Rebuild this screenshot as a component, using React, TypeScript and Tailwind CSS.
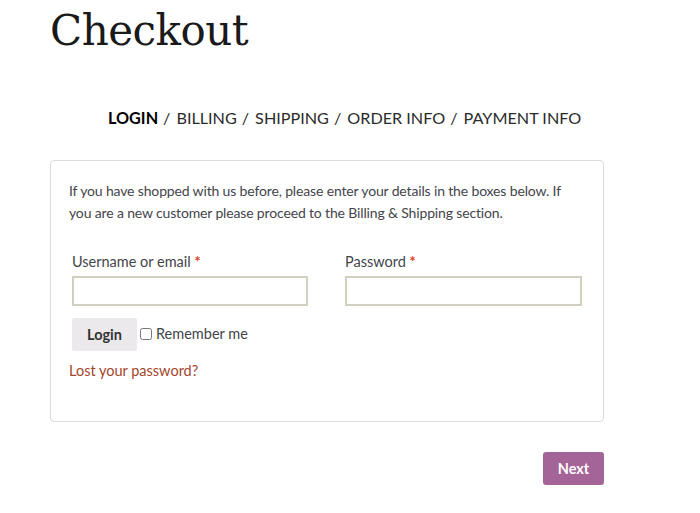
export default function App() {
  const steps = ['BILLING', 'SHIPPING', 'ORDER INFO', 'PAYMENT INFO'];
  return (
    <div className="w-[700px] h-[513px] bg-white text-[#43454b] font-['Lato','Open_Sans',sans-serif]">
      <div className="pl-[50px] w-[604px]">
        <h1 className="pt-[6px] text-[42px] leading-[50px] text-[#1a1a1a] font-['DejaVu_Serif',serif] tracking-[-0.5px]">
          Checkout
        </h1>

        <div className="mt-[51px] ml-[58px] flex items-center text-[16.2px] leading-[22px] text-[#2b2b2b]">
          <span className="font-bold text-black">LOGIN</span>
          {steps.map((s) => (
            <span key={s} className="flex">
              <span className="mx-[5px]">/</span>
              <span className="ml-[1px]">{s}</span>
            </span>
          ))}
        </div>

        <div className="mt-[31px] border border-[#dcdcdc] rounded-[4px] pl-[18px] pr-[20px] pt-[19px] pb-[40px] h-[262px]">
          <p className="text-[14px] tracking-[-0.15px] leading-[22px]">
            If you have shopped with us before, please enter your details in the boxes below. If you are a new customer please proceed to the Billing &amp; Shipping section.
          </p>

          <div className="mt-[28px] ml-[3px] grid grid-cols-[236px_237px] gap-x-[37px]">
            <div>
              <label className="block text-[14.5px] leading-[20px]">
                Username or email <span className="text-[#e2401c] font-bold">*</span>
              </label>
              <input className="mt-[4px] w-[236px] h-[30px] border-2 border-[#d3cfc0] bg-white outline-none" />
            </div>
            <div>
              <label className="block text-[14.5px] leading-[20px]">
                Password <span className="text-[#e2401c] font-bold">*</span>
              </label>
              <input type="password" className="mt-[4px] w-[237px] h-[30px] border-2 border-[#d3cfc0] bg-white outline-none" />
            </div>
          </div>

          <div className="mt-[12px] ml-[3px] flex items-start">
            <button className="w-[65px] h-[33px] bg-[#ebe9eb] rounded-[2px] text-[14.5px] font-bold text-[#333]">
              Login
            </button>
            <label className="ml-[3px] mt-[8px] flex items-start text-[14.5px] leading-[16px]">
              <input type="checkbox" className="mt-[2px] w-[12px] h-[12px] mr-[4px]" />
              Remember me
            </label>
          </div>

          <a className="block mt-[10px] text-[14.5px] leading-[20px] text-[#a4462c]">
            Lost your password?
          </a>
        </div>

        <div className="mt-[30px] flex justify-end">
          <button className="w-[61px] h-[33px] bg-[#a46497] rounded-[3px] text-white font-bold text-[14.5px]">
            Next
          </button>
        </div>
      </div>
    </div>
  );
}
